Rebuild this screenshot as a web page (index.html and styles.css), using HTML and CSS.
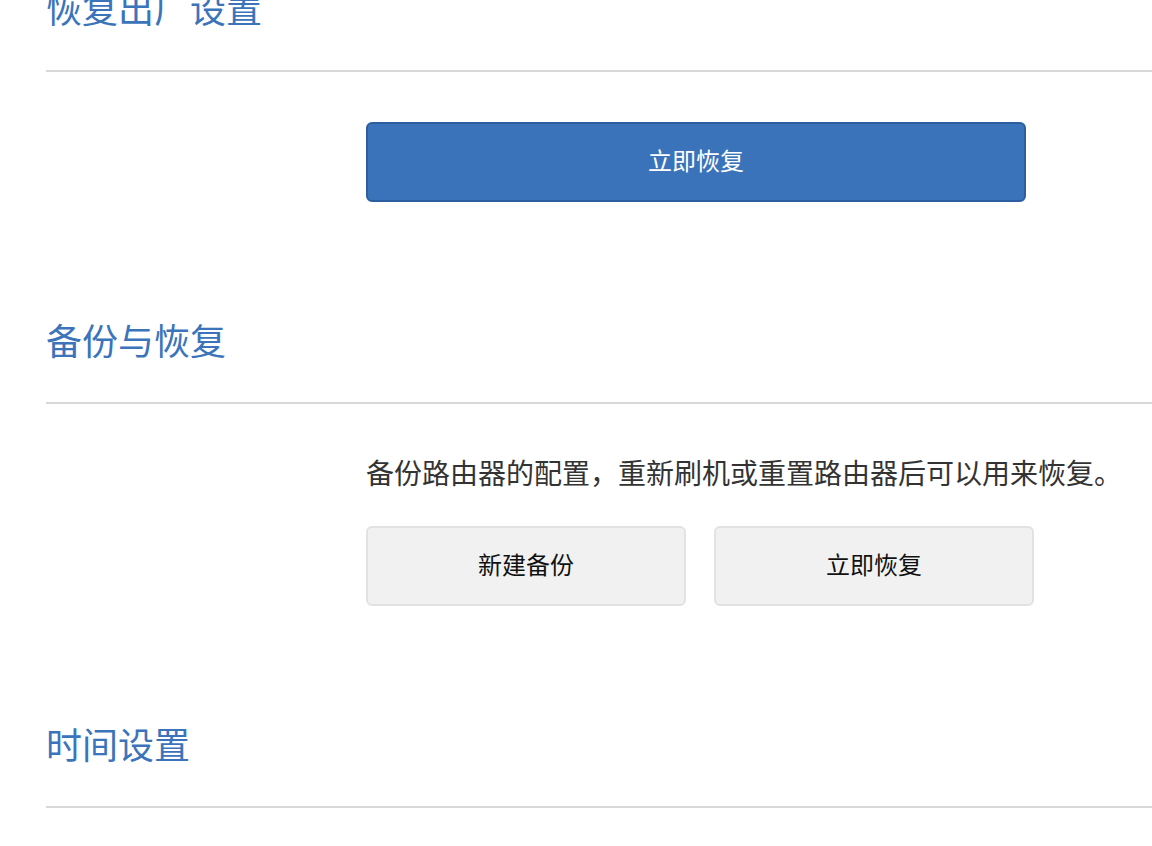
FILE: index.html
```html
<!DOCTYPE html>
<html lang="zh-CN">
<head>
<meta charset="utf-8">
<title>系统设置</title>
<link rel="stylesheet" href="styles.css">
</head>
<body>
<main class="page">
  <section class="section">
    <h2 class="section-title">恢复出厂设置</h2>
    <div class="section-body">
      <button class="btn btn-primary btn-wide">立即恢复</button>
    </div>
  </section>
  <section class="section">
    <h2 class="section-title">备份与恢复</h2>
    <div class="section-body">
      <p class="desc">备份路由器的配置，重新刷机或重置路由器后可以用来恢复。</p>
      <div class="btn-row">
        <button class="btn btn-default">新建备份</button>
        <button class="btn btn-default">立即恢复</button>
      </div>
    </div>
  </section>
  <section class="section">
    <h2 class="section-title">时间设置</h2>
    <div class="section-body"></div>
  </section>
</main>
</body>
</html>
```
FILE: styles.css
```css
html, body {
  margin: 0;
  padding: 0;
  background: #ffffff;
  overflow: hidden;
}
body {
  font-family: "Noto Sans CJK SC", "Noto Sans", sans-serif;
  color: #333333;
}
.page {
  margin-top: -18px;
  padding-left: 46px;
}
.section-title {
  margin: 0;
  font-size: 36px;
  line-height: 50px;
  font-weight: normal;
  color: #3b74ba;
  padding-bottom: 38px;
  border-bottom: 2px solid #d8d8d8;
}
.section-body {
  padding: 50px 0 112px 320px;
}
.desc {
  margin: 0 0 36px;
  font-size: 28px;
  line-height: 36px;
  color: #333333;
  white-space: nowrap;
}
.btn-row {
  display: flex;
  gap: 28px;
}
.btn {
  display: flex;
  align-items: center;
  justify-content: center;
  box-sizing: border-box;
  height: 80px;
  font-family: inherit;
  font-size: 24px;
  border-radius: 6px;
  cursor: pointer;
  padding: 0 0 5px;
}
.btn-primary {
  background: #3a73b9;
  border: 2px solid #2c5f9f;
  color: #ffffff;
}
.btn-wide {
  width: 660px;
}
.btn-default {
  width: 320px;
  background: #f1f1f1;
  border: 2px solid #e2e2e2;
  color: #111111;
}
```
